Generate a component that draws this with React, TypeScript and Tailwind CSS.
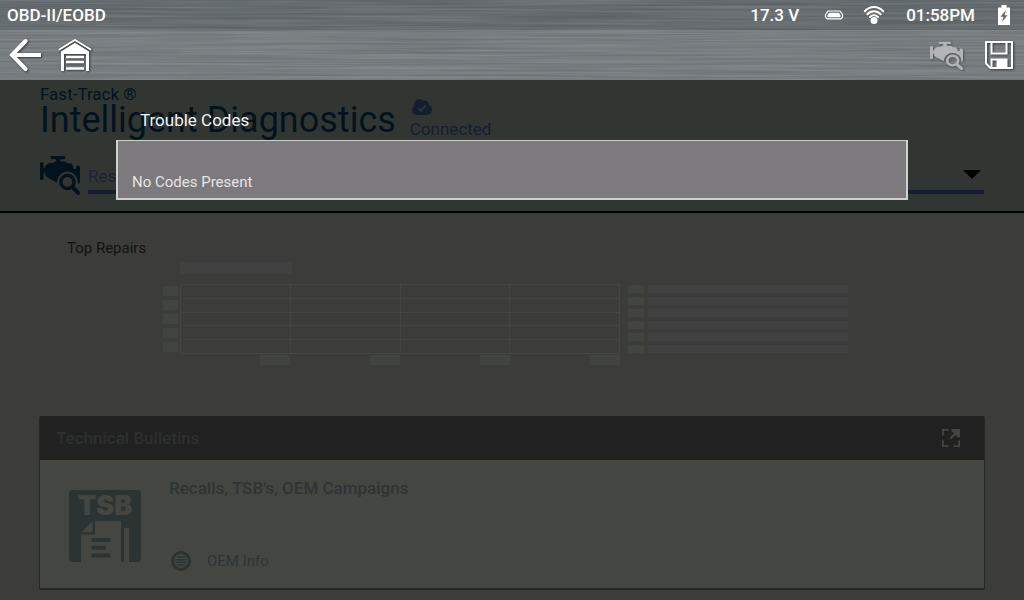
import React from "react";

const FONT = "font-['Roboto','Liberation_Sans',sans-serif]";

function BrushedMetal({ id, seed, color }: { id: string; seed: number; color: string }) {
  return (
    <svg className="absolute inset-0 h-full w-full" aria-hidden="true">
      <filter id={id} x="0" y="0" width="100%" height="100%" colorInterpolationFilters="sRGB">
        <feTurbulence type="fractalNoise" baseFrequency="0.006 0.45" numOctaves="3" seed={seed} />
        <feColorMatrix values="0.4 0 0 0 0.23  0.4 0 0 0 0.25  0.4 0 0 0 0.26  0 0 0 0 0.35" />
      </filter>
      <rect width="100%" height="100%" fill={color} />
      <rect width="100%" height="100%" filter={`url(#${id})`} />
    </svg>
  );
}

function EngineSearch({ id, className }: { id: string; className: string }) {
  return (
    <svg viewBox="0 0 40 40" preserveAspectRatio="none" className={className} fill="currentColor" aria-hidden="true">
      <mask id={id}>
        <rect width="40" height="40" fill="white" />
        <circle cx="27.5" cy="27" r="10.4" fill="black" />
        <path d="M31 31l8 8" stroke="black" strokeWidth="6" />
      </mask>
      <g mask={`url(#${id})`}>
        <rect x="10.5" y="1" width="15" height="3.2" rx="1.4" />
        <rect x="16" y="3" width="4.4" height="5" />
        <rect x="0" y="7" width="3.6" height="18" rx="1.6" />
        <rect x="3" y="13" width="5" height="4.6" />
        <path d="M9 8h4l2-1.6h10l3 2.2h3.6l2 4v14l-10 1-8-.4-8.6-5.2-2-2V11z" />
        <rect x="32" y="14" width="6" height="8" />
        <rect x="36" y="10.5" width="4" height="18" rx="1.6" />
      </g>
      <circle cx="27.5" cy="27" r="6.6" fill="none" stroke="currentColor" strokeWidth="3.4" />
      <path d="M32.4 32l5.8 5.8" stroke="currentColor" strokeWidth="4" strokeLinecap="round" />
    </svg>
  );
}

function BackArrow() {
  return (
    <svg width="34" height="34" viewBox="0 0 34 34" className="drop-shadow-[1px_1px_1px_#33383b]" fill="none" stroke="white" strokeWidth="4" aria-hidden="true">
      <path d="M17.6 3L4 17l13.6 14" strokeLinecap="round" />
      <path d="M4 17h29" />
    </svg>
  );
}

function Garage() {
  return (
    <svg width="34" height="34" viewBox="0 0 34 34" className="drop-shadow-[1px_1px_1px_#33383b]" aria-hidden="true">
      <path d="M1.800 11.400L17 2l15.200 9.400" fill="none" stroke="white" strokeWidth="2" strokeLinejoin="round" strokeLinecap="round" />
      <path d="M17 4.800l14 8.600V33h-3V16H6v17H3V13.400z" fill="white" />
      <path d="M1.800 12.800L17 3.700l15.200 9.100" fill="none" stroke="#4c5255" strokeWidth="0.900" />
      <path d="M8 19h18M8 24h18M8 30.500h18" stroke="white" strokeWidth="2.400" />
    </svg>
  );
}

function Floppy() {
  return (
    <svg width="30" height="30" viewBox="0 0 30 30" className="drop-shadow-[1px_1px_1px_#33383b]" fill="none" stroke="white" strokeWidth="2" aria-hidden="true">
      <path d="M2 2h26v26H6.500L2 23.500z" strokeLinejoin="round" />
      <path d="M7.500 2v11.500h15V2" />
      <path d="M7.500 28v-8.500h15V28" />
      <path d="M13.500 20h8.500v7h-8.500z" fill="white" />
    </svg>
  );
}

function Connector() {
  return (
    <svg width="20" height="10" viewBox="0 0 20 10" fill="none" aria-hidden="true">
      <path d="M4 1h12l2.500 3.500V7l-1.500 1.800H3L1.500 7V4.500z" stroke="white" strokeWidth="1.200" strokeLinejoin="round" />
      <path d="M5 2.800h10l1.400 2.400v2H3.600v-2z" fill="white" />
    </svg>
  );
}

function Wifi() {
  return (
    <svg width="22" height="20" viewBox="0 0 22 20" fill="none" stroke="white" strokeWidth="2" strokeLinecap="round" aria-hidden="true">
      <path d="M1.800 6.200c5.200-5.600 13.200-5.600 18.400 0" />
      <path d="M4.400 9.200c3.800-4 9.400-4 13.200 0" />
      <path d="M7 12c2.300-2.300 5.700-2.300 8 0" />
      <circle cx="11" cy="15.500" r="3.500" fill="white" stroke="none" />
    </svg>
  );
}

function Battery() {
  return (
    <svg width="12" height="20" viewBox="0 0 12 20" aria-hidden="true">
      <path d="M3.500 0h5v2.500H12V20H0V2.500h3.500z" fill="white" />
      <path d="M8 5L2.500 11.800h3L4 17l5.500-6.800h-3z" fill="#60676a" />
    </svg>
  );
}

function CloudCheck() {
  return (
    <svg width="20" height="16" viewBox="0 0 20 16" fill="#141e30" aria-hidden="true">
      <circle cx="7.600" cy="5.400" r="5.400" />
      <circle cx="12.500" cy="6" r="4.400" />
      <circle cx="4.600" cy="11.300" r="4.600" />
      <circle cx="15" cy="10.800" r="5" />
      <rect x="4.600" y="6" width="10.600" height="10" />
      <path d="M6.300 9.200l2.500 2.500 4.800-5" fill="none" stroke="#323632" strokeWidth="1.800" />
    </svg>
  );
}

function TsbIcon() {
  return (
    <svg width="72" height="72" viewBox="0 0 72 72" role="img" aria-label="TSB" className="font-['Inter','Roboto',sans-serif]">
      <rect width="72" height="72" rx="3.500" fill="#2c3433" />
      <text x="36" y="25" textAnchor="middle" fontSize="27" fontWeight="900" fill="#444642">TSB</text>
      <path d="M26 31h26v41H12V44h14z" fill="#444642" />
      <path d="M23.500 31.500v10.700H12.500z" fill="#444642" />
      <path d="M25 31v12.600H12" fill="none" stroke="#2c3433" strokeWidth="1.600" />
      <path d="M55 38h5v34h-5z" fill="#444642" />
      <path d="M22.500 50h19M22.500 57.800h14.500M22.500 65.500h19" stroke="#2c3433" strokeWidth="4" />
    </svg>
  );
}

function InfoIcon() {
  return (
    <svg width="20" height="20" viewBox="0 0 20 20" fill="none" aria-hidden="true">
      <circle cx="10" cy="10" r="8.500" stroke="#2c3433" strokeWidth="3" />
      <path d="M6 6h8M4.500 8.700h11M4.500 11.300h11M6 14h8" stroke="#2c3433" strokeWidth="1.500" />
    </svg>
  );
}

function Expand() {
  return (
    <svg width="18" height="18" viewBox="0 0 18 18" fill="none" stroke="#444642" strokeWidth="1.800" aria-hidden="true">
      <path d="M.9 6.500V.9h5.600M.9 11.500v5.600h5.600M11.500 17.100h5.600v-5.600" />
      <path d="M8.500 9.500L15 3" strokeWidth="2.400" />
      <path d="M9.500 0H18v8.500h-2L9.500 2z" fill="#444642" stroke="none" />
    </svg>
  );
}

const CHART_ROWS = [0, 1, 2, 3, 4];
const CHART_COLUMNS = [0, 1, 2, 3];
const LEGEND_ROWS = [0, 1, 2, 3, 4, 5];

function ChartPlaceholder() {
  return (
    <div className="pl-[163px]" aria-hidden="true">
      <div className="ml-[17px] h-3 w-28 bg-[#424142]" />
      <div className="mt-[10px] flex">
        <div className="flex w-[17px] flex-col gap-1 pt-0.5">
          {CHART_ROWS.map((r) => (
            <div key={r} className="h-[10px] w-[15px] bg-[#424440]" />
          ))}
        </div>
        <div className="w-[440px]">
          <div className="grid h-[70px] grid-cols-4 grid-rows-5 border-r border-b border-[#444642]">
            {CHART_ROWS.map((r) =>
              CHART_COLUMNS.map((c) => <div key={`${r}-${c}`} className="border-t border-l border-[#444642]" />)
            )}
          </div>
          <div className="mt-px grid grid-cols-4 justify-items-end">
            {CHART_COLUMNS.map((c) => (
              <div key={c} className="h-[10px] w-[30px] bg-[#424440]" />
            ))}
          </div>
        </div>
        <div className="ml-2 flex flex-col gap-1 pt-px">
          {LEGEND_ROWS.map((r) => (
            <div key={r} className="flex gap-1">
              <div className="h-2 w-4 bg-[#424440]" />
              <div className="h-2 w-[200px] bg-[#424142]" />
            </div>
          ))}
        </div>
      </div>
    </div>
  );
}

export default function App() {
  return (
    <div className={`relative flex min-h-screen flex-col bg-[#3c3d3a] ${FONT}`}>
      <header className="relative flex h-[30px] items-center justify-between overflow-hidden pr-[14px] pl-[7px] text-[17px] font-medium text-white">
        <BrushedMetal id="metal-status" seed={4} color="#62696c" />
        <h1 className="relative pt-px">OBD-II/EOBD</h1>
        <div className="relative flex items-center">
          <span className="pt-px">17.3 V</span>
          <span className="ml-[25px]"><Connector /></span>
          <span className="ml-[19px]"><Wifi /></span>
          <span className="ml-[21px] pt-px">01:58PM</span>
          <span className="ml-[23px]"><Battery /></span>
        </div>
      </header>

      <nav className="relative flex h-[50px] items-center justify-between overflow-hidden pr-[10px] pl-2">
        <BrushedMetal id="metal-toolbar" seed={11} color="#7d8386" />
        <div className="relative flex items-center gap-4">
          <button type="button" aria-label="Back"><BackArrow /></button>
          <button type="button" aria-label="Garage"><Garage /></button>
        </div>
        <div className="relative flex items-center gap-[21px]">
          <button type="button" aria-label="Scan codes" className="text-[#b2b4b5]">
            <EngineSearch id="engine-toolbar" className="h-[29px] w-[33px] drop-shadow-[1px_1px_1px_#4a5053]" />
          </button>
          <button type="button" aria-label="Save"><Floppy /></button>
        </div>
      </nav>

      <section className="h-[133px] border-b-2 border-black bg-[#323632] px-10">
        <div className="flex h-[60px] items-end gap-[14px]">
          <div className="pb-1 text-[#02131d]">
            <p className="text-[17px] leading-5">Fast-Track ®</p>
            <h2 className="text-[36px] leading-8">Intelligent Diagnostics</h2>
          </div>
          <div className="flex flex-col gap-1 pb-px">
            <span className="pl-0.5"><CloudCheck /></span>
            <span className="text-[17px] leading-5 text-[#141e30]">Connected</span>
          </div>
        </div>
        <div className="mt-[15px] flex gap-2">
          <EngineSearch id="engine-filter" className="h-10 w-10 shrink-0 text-[#02131d]" />
          <div className="relative h-[39px] flex-1 border-b-4 border-[#141e30]">
            <select aria-label="View" className="h-full w-full appearance-none bg-transparent pt-2 text-[17px] text-[#1a2436] outline-none">
              <option>Results</option>
            </select>
            <svg width="18" height="9" viewBox="0 0 18 9" className="pointer-events-none absolute top-[15px] right-[3px]" aria-hidden="true">
              <path d="M0 0h18L9 9z" fill="black" />
            </svg>
          </div>
        </div>
      </section>

      <main className="flex flex-1 flex-col">
        <h3 className="pt-[25px] pl-[67px] text-[15px] leading-5 text-[#121311]">Top Repairs</h3>
        <div className="pt-1">
          <ChartPlaceholder />
        </div>

        <article className="mx-[39px] mt-[51px] rounded-xs border border-t-0 border-b-2 border-[#262826] bg-[#444642]">
          <header className="flex h-11 items-center justify-between bg-[#212121] pr-6 pl-4">
            <h3 className="pt-px text-[17px] font-medium text-[#2c302e]">Technical Bulletins</h3>
            <button type="button" aria-label="Expand"><Expand /></button>
          </header>
          <div className="flex h-32 items-start gap-7 pt-[18px] pl-[29px]">
            <span className="pt-3"><TsbIcon /></span>
            <div>
              <h4 className="text-[17px] leading-5 font-medium text-[#2c3536]">Recalls, TSB's, OEM Campaigns</h4>
              <p className="mt-[53px] flex items-center gap-4 pl-0.5 text-[15px] leading-5 text-[#2c3536]">
                <InfoIcon />
                OEM Info
              </p>
            </div>
          </div>
        </article>
      </main>

      <div role="dialog" aria-labelledby="codes-title" className="absolute inset-x-[116px] top-[110px]">
        <h2 id="codes-title" className="pl-6 text-[17px] leading-5 text-[#f2f2f2]">Trouble Codes</h2>
        <div className="mt-[10px] flex h-[60px] items-end border-2 border-t border-[#cfd1cf] bg-[#7d7a7d] px-[14px] pb-[6px] text-[15px] leading-5 text-[#e4e4e4]">
          No Codes Present
        </div>
      </div>
    </div>
  );
}
